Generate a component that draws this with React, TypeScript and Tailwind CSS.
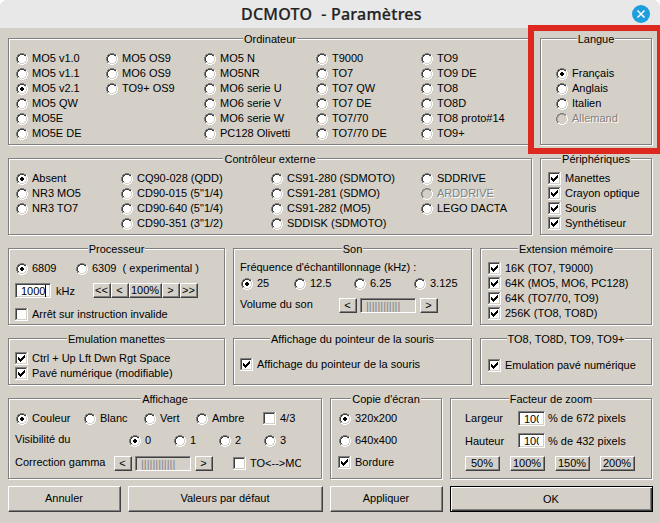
import React from "react";

type Kids = { children?: React.ReactNode };

function Group({ title, className = "", children }: { title: string; className?: string } & Kids) {
  return (
    <section
      className={`relative mr-px mb-px shrink-0 border border-[#808080] shadow-[1px_1px_0_#fff,inset_1px_1px_0_#fff] ${className}`}
    >
      <div className="absolute inset-x-0 -top-[7px] flex justify-center">
        <h2 className="h-[12px] bg-[#d4d0c8] px-px whitespace-pre">{title}</h2>
      </div>
      {children}
    </section>
  );
}

function RadioMark({ on, off }: { on?: boolean; off?: boolean }) {
  return (
    <svg width="12" height="12" viewBox="0 0 12 12" shapeRendering="crispEdges" className="mt-[2px] mr-[4px] ml-px shrink-0">
      <path d="M4 2h4v1h1v1h1v4H9v1H8v1H4V9H3V8H2V4h1V3h1z" fill={off ? "#d4d0c8" : "#fff"} />
      <path d="M4 0h4v1H4zM2 1h2v1H2zM8 1h2v1H8zM1 2h1v2H1zM0 4h1v4H0zM1 8h1v2H1z" fill="#808080" />
      <path d="M4 1h4v1H4zM2 2h2v1H2zM8 2h2v1H8zM2 3h1v1H2zM1 4h1v4H1zM2 8h1v1H2z" fill={off ? "#a8a49d" : "#404040"} />
      <path d="M10 2h1v2h-1zM11 4h1v4h-1zM10 8h1v2h-1zM8 10h2v1H8zM2 10h2v1H2zM4 11h4v1H4z" fill="#fff" />
      {on && <path d="M5 4h2v1h1v2H7v1H5V7H4V5h1z" fill="#000" />}
    </svg>
  );
}

function CheckMark({ on }: { on?: boolean }) {
  return (
    <svg width="13" height="13" viewBox="0 0 13 13" shapeRendering="crispEdges" className="mt-px mr-[4px] shrink-0">
      <path d="M0 0h13v13H0z" fill="#fff" />
      <path d="M0 0h12v1H1v11H0z" fill="#808080" />
      <path d="M1 1h10v1H2v9H1z" fill="#404040" />
      <path d="M11 1h1v11H1v-1h10z" fill="#d4d0c8" />
      {on && (
        <path
          d="M3 5h1v3h-1zM4 6h1v3h-1zM5 7h1v3h-1zM6 6h1v3h-1zM7 5h1v3h-1zM8 4h1v3h-1zM9 3h1v3h-1z"
          fill="#000"
        />
      )}
    </svg>
  );
}

type OptProps = { label: string; on?: boolean; off?: boolean; className?: string };

function Radio({ label, on, off, className = "" }: OptProps) {
  return (
    <label className={`flex h-[15px] shrink-0 ${className}`}>
      <RadioMark on={on} off={off} />
      <span className={off ? "text-[#808080] [text-shadow:1px_1px_0_#fff]" : ""}>{label}</span>
    </label>
  );
}

function Check({ label, on, className = "" }: OptProps) {
  return (
    <label className={`flex h-[15px] shrink-0 ${className}`}>
      <CheckMark on={on} />
      <span>{label}</span>
    </label>
  );
}

function Column({ items, selected, disabled, className = "" }: { items: string[]; selected?: string; disabled?: string; className?: string }) {
  return (
    <div className={`flex shrink-0 flex-col ${className}`}>
      {items.map((t) => (
        <Radio key={t} label={t} on={t === selected} off={t === disabled} />
      ))}
    </div>
  );
}

function SmallButton({ className = "", children }: { className?: string } & Kids) {
  return (
    <button
      className={`flex h-[15px] shrink-0 justify-center border border-t-white border-r-[#404040] border-b-[#404040] border-l-white pr-px leading-[13px] shadow-[inset_-1px_-1px_0_#808080] ${className}`}
    >
      {children}
    </button>
  );
}

function BigButton({ className = "", children }: { className?: string } & Kids) {
  return (
    <button
      className={`flex h-[26px] shrink-0 items-center justify-center border border-t-white border-r-[#404040] border-b-[#404040] border-l-white pr-px pb-[2px] shadow-[inset_-1px_-1px_0_#808080] ${className}`}
    >
      {children}
    </button>
  );
}

const sunken =
  "h-[15px] shrink-0 border border-t-[#808080] border-r-white border-b-white border-l-[#808080] shadow-[inset_1px_1px_0_#404040,inset_-1px_-1px_0_#d4d0c8]";

function Field({ value, className = "" }: { value: string; className?: string }) {
  return (
    <div className={`${sunken} flex bg-white leading-[15px] ${className}`}>
      <span className="overflow-hidden whitespace-nowrap">{value}</span>
    </div>
  );
}

function Slider() {
  return (
    <div className="flex">
      <SmallButton className="mr-[3px] w-[18px]">&lt;</SmallButton>
      <div className={`${sunken} mr-[4px] w-[56px] pl-[5px] leading-[14px] text-[#85828a]`}>||||||||||||</div>
      <SmallButton className="w-[18px]">&gt;</SmallButton>
    </div>
  );
}

export default function App() {
  return (
    <div className="h-[523px] w-[660px] overflow-hidden bg-white">
      <div className="relative flex h-[523px] w-[660px] flex-col overflow-hidden rounded-t-[8px] bg-[#d4d0c8] font-['Liberation_Sans',Arial,sans-serif] text-[11px] leading-[15px] whitespace-nowrap text-black">
        <header className="flex h-[28px] shrink-0 items-center bg-[#e8e8e8] pr-[10px] pl-[241px]">
          <h1 className="font-['Noto_Sans',sans-serif] text-[16px] leading-[28px] font-medium tracking-[0.25px] whitespace-pre text-[#222] [-webkit-text-stroke:0.2px_#222]">
            DCMOTO  - Paramètres
          </h1>
          <svg width="18" height="18" viewBox="0 0 18 18" className="ml-auto">
            <circle cx="9" cy="9" r="9" fill="#1f9ede" />
            <path d="M5.5 5.5l7 7M12.5 5.5l-7 7" stroke="#fff" strokeWidth="1.5" />
          </svg>
        </header>

        <main className="flex flex-col gap-[12px] pt-[10px] pl-[8px]">
          <div className="flex h-[108px] gap-[7px]">
            <Group title="Ordinateur" className="flex w-[524px] pt-[12px] pl-[6px]">
              <Column className="w-[90px]" items={["MO5 v1.0", "MO5 v1.1", "MO5 v2.1", "MO5 QW", "MO5E", "MO5E DE"]} selected="MO5 v2.1" />
              <Column className="w-[98px]" items={["MO5 OS9", "MO6 OS9", "TO9+ OS9"]} />
              <Column className="w-[112px]" items={["MO5 N", "MO5NR", "MO6 serie U", "MO6 serie V", "MO6 serie W", "PC128 Olivetti"]} />
              <Column className="w-[105px]" items={["T9000", "TO7", "TO7 QW", "TO7 DE", "TO7/70", "TO7/70 DE"]} />
              <Column items={["TO9", "TO9 DE", "TO8", "TO8D", "TO8 proto#14", "TO9+"]} />
            </Group>
            <Group title="Langue" className="w-[112px] pt-[27px] pl-[14px]">
              <Column items={["Français", "Anglais", "Italien", "Allemand"]} selected="Français" disabled="Allemand" />
            </Group>
          </div>

          <div className="flex h-[78px] gap-[7px]">
            <Group title="Contrôleur externe" className="flex w-[524px] pt-[12px] pl-[6px]">
              <Column className="w-[105px]" items={["Absent", "NR3 MO5", "NR3 TO7"]} selected="Absent" />
              <Column className="w-[150px]" items={["CQ90-028 (QDD)", 'CD90-015 (5"1/4)', 'CD90-640 (5"1/4)', 'CD90-351 (3"1/2)']} />
              <Column className="w-[150px]" items={["CS91-280 (SDMOTO)", "CS91-281 (SDMO)", "CS91-282 (MO5)", "SDDISK (SDMOTO)"]} />
              <Column items={["SDDRIVE", "ARDDRIVE", "LEGO DACTA"]} disabled="ARDDRIVE" />
            </Group>
            <Group title="Périphériques" className="w-[112px] pt-[12px] pl-[7px]">
              {["Manettes", "Crayon optique", "Souris", "Synthétiseur"].map((t) => (
                <Check key={t} label={t} on />
              ))}
            </Group>
          </div>

          <div className="flex h-[78px] gap-[7px]">
            <Group title="Processeur" className="w-[217px] pt-[12px] pl-[6px]">
              <div className="flex">
                <Radio className="w-[60px]" label="6809" on />
                <Radio className="whitespace-pre" label="6309  ( experimental )" />
              </div>
              <div className="mt-[7px] flex">
                <div className={`${sunken} flex w-[36px] bg-white pl-[5px] leading-[15px]`}>
                  1000
                  <i className="mt-px h-[12px] w-px bg-black" />
                </div>
                <span className="mt-px w-[42px] pl-[5px]">kHz</span>
                <SmallButton className="w-[18px]">&lt;&lt;</SmallButton>
                <SmallButton className="w-[18px]">&lt;</SmallButton>
                <SmallButton className="w-[33px]">100%</SmallButton>
                <SmallButton className="w-[18px]">&gt;</SmallButton>
                <SmallButton className="w-[18px]">&gt;&gt;</SmallButton>
              </div>
              <Check className="mt-[8px]" label="Arrêt sur instruction invalide" />
            </Group>
            <Group title="Son" className="w-[239px] pt-[11px] pl-[6px]">
              <p>Fréquence d'échantillonnage (kHz) :</p>
              <div className="mt-px flex">
                <Radio className="w-[53px]" label="25" on />
                <Radio className="w-[60px]" label="12.5" />
                <Radio className="w-[60px]" label="6.25" />
                <Radio label="3.125" />
              </div>
              <div className="mt-[6px] flex">
                <span className="w-[99px]">Volume du son</span>
                <div className="mt-px">
                  <Slider />
                </div>
              </div>
            </Group>
            <Group title="Extension mémoire" className="w-[172px] pt-[12px] pl-[7px]">
              {["16K (TO7, T9000)", "64K (MO5, MO6, PC128)", "64K (TO7/70, TO9)", "256K (TO8, TO8D)"].map((t) => (
                <Check key={t} label={t} on />
              ))}
            </Group>
          </div>

          <div className="flex h-[48px] gap-[7px]">
            <Group title="Emulation manettes" className="w-[217px] pt-[12px] pl-[6px]">
              <Check label="Ctrl + Up Lft Dwn Rgt Space" on />
              <Check label="Pavé numérique (modifiable)" on />
            </Group>
            <Group title="Affichage du pointeur de la souris" className="w-[239px] pt-[18px] pl-[6px]">
              <Check label="Affichage du pointeur de la souris" on />
            </Group>
            <Group title="TO8, TO8D, TO9, TO9+" className="w-[172px] pt-[19px] pl-[7px]">
              <Check label="Emulation pavé numérique" on />
            </Group>
          </div>

          <div className="flex h-[82px] gap-[7px]">
            <Group title="Affichage" className="w-[314px] pt-[12px] pl-[6px]">
              <div className="flex">
                <Radio className="w-[68px]" label="Couleur" on />
                <Radio className="w-[60px]" label="Blanc" />
                <Radio className="w-[52px]" label="Vert" />
                <Radio className="w-[68px]" label="Ambre" />
                <Check label="4/3" />
              </div>
              <div className="mt-[6px] flex">
                <span className="w-[113px]">Visibilité du</span>
                <div className="mt-px flex">
                  <Radio className="w-[45px]" label="0" on />
                  <Radio className="w-[45px]" label="1" />
                  <Radio className="w-[45px]" label="2" />
                  <Radio label="3" />
                </div>
              </div>
              <div className="mt-[7px] flex">
                <span className="w-[99px]">Correction gamma</span>
                <div className="mt-px flex">
                  <Slider />
                  <Check className="ml-[20px] w-[68px] overflow-hidden" label="TO<-->MO" />
                </div>
              </div>
            </Group>
            <Group title="Copie d'écran" className="w-[112px] pt-[12px] pl-[7px]">
              <Radio label="320x200" on />
              <Radio className="mt-[7px]" label="640x400" />
              <Check className="mt-[7px]" label="Bordure" on />
            </Group>
            <Group title="Facteur de zoom" className="w-[202px] pt-[12px] pl-[14px]">
              <div className="flex">
                <span className="w-[53px]">Largeur</span>
                <Field className="w-[27px] pr-[5px] pl-[5px]" value="100" />
                <span className="ml-[3px]">% de 672 pixels</span>
              </div>
              <div className="mt-[7px] flex">
                <span className="mt-px w-[53px]">Hauteur</span>
                <Field className="w-[27px] pr-[5px] pl-[5px]" value="100" />
                <span className="mt-px ml-[3px]">% de 432 pixels</span>
              </div>
              <div className="mt-[7px] flex gap-[10px]">
                {["50%", "100%", "150%", "200%"].map((t) => (
                  <SmallButton key={t} className="w-[35px]">
                    {t}
                  </SmallButton>
                ))}
              </div>
            </Group>
          </div>
        </main>

        <footer className="flex gap-[7px] pt-[6px] pl-[8px]">
          <BigButton className="w-[113px]">Annuler</BigButton>
          <BigButton className="w-[195px]">Valeurs par défaut</BigButton>
          <BigButton className="w-[113px]">Appliquer</BigButton>
          <button className="flex h-[26px] w-[203px] shrink-0 items-center justify-center border border-black pr-px shadow-[inset_1px_1px_0_#fff,inset_-1px_-1px_0_#404040,inset_-2px_-2px_0_#808080]">
            OK
          </button>
        </footer>

        <div className="pointer-events-none absolute top-[25px] left-[528px] h-[129px] w-[135px] border-[6px] border-[#dc281e]" />
      </div>
    </div>
  );
}
